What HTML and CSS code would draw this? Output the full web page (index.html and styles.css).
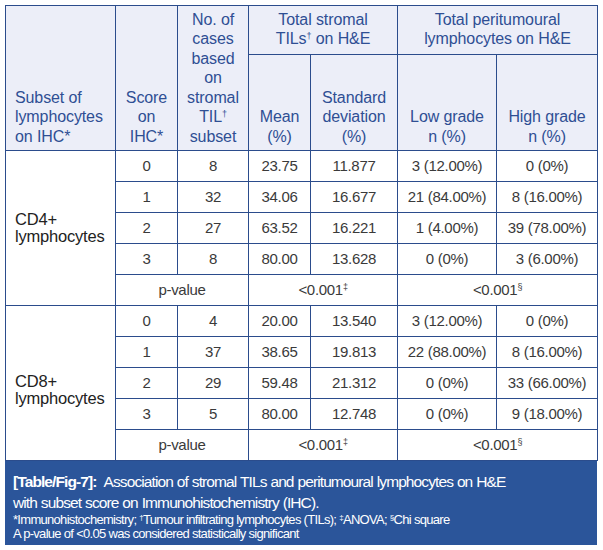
FILE: index.html
```html
<!DOCTYPE html>
<html>
<head>
<meta charset="utf-8">
<link rel="stylesheet" href="styles.css">
</head>
<body>
<div class="figure">
  <table class="data">
    <colgroup>
      <col class="c1"><col class="c2"><col class="c3"><col class="c4"><col class="c5"><col class="c6"><col class="c7">
    </colgroup>
    <thead>
      <tr class="h1">
        <th rowspan="2" class="left">Subset of<br>lymphocytes<br>on IHC*</th>
        <th rowspan="2">Score<br>on<br>IHC*</th>
        <th rowspan="2">No. of<br>cases<br>based<br>on<br>stromal<br>TIL<sup>†</sup><br>subset</th>
        <th colspan="2" class="mid">Total stromal<br>TILs<sup>†</sup> on H&amp;E</th>
        <th colspan="2" class="mid">Total peritumoural<br>lymphocytes on H&amp;E</th>
      </tr>
      <tr class="h2">
        <th>Mean<br>(%)</th>
        <th>Standard<br>deviation<br>(%)</th>
        <th>Low grade<br>n (%)</th>
        <th>High grade<br>n (%)</th>
      </tr>
    </thead>
    <tbody>
      <tr><td rowspan="5" class="label">CD4+<br>lymphocytes</td><td>0</td><td>8</td><td>23.75</td><td>11.877</td><td>3 (12.00%)</td><td>0 (0%)</td></tr>
      <tr><td>1</td><td>32</td><td>34.06</td><td>16.677</td><td>21 (84.00%)</td><td>8 (16.00%)</td></tr>
      <tr><td>2</td><td>27</td><td>63.52</td><td>16.221</td><td>1 (4.00%)</td><td>39 (78.00%)</td></tr>
      <tr><td>3</td><td>8</td><td>80.00</td><td>13.628</td><td>0 (0%)</td><td>3 (6.00%)</td></tr>
      <tr><td colspan="2">p-value</td><td colspan="2">&lt;0.001<sup>‡</sup></td><td colspan="2">&lt;0.001<sup>§</sup></td></tr>
      <tr><td rowspan="5" class="label lower">CD8+<br>lymphocytes</td><td>0</td><td>4</td><td>20.00</td><td>13.540</td><td>3 (12.00%)</td><td>0 (0%)</td></tr>
      <tr><td>1</td><td>37</td><td>38.65</td><td>19.813</td><td>22 (88.00%)</td><td>8 (16.00%)</td></tr>
      <tr><td>2</td><td>29</td><td>59.48</td><td>21.312</td><td>0 (0%)</td><td>33 (66.00%)</td></tr>
      <tr><td>3</td><td>5</td><td>80.00</td><td>12.748</td><td>0 (0%)</td><td>9 (18.00%)</td></tr>
      <tr><td colspan="2">p-value</td><td colspan="2">&lt;0.001<sup>‡</sup></td><td colspan="2">&lt;0.001<sup>§</sup></td></tr>
    </tbody>
  </table>
  <div class="caption">
    <p class="title"><b>[Table/Fig-7]:</b>&nbsp; Association of stromal TILs and peritumoural lymphocytes on H&amp;E<br>with subset score on Immunohistochemistry (IHC).</p>
    <p class="note">*Immunohistochemistry; <sup>†</sup>Tumour infiltrating lymphocytes (TILs); <sup>‡</sup>ANOVA; <sup>§</sup>Chi square</p>
    <p class="note">A p-value of &lt;0.05 was considered statistically significant</p>
  </div>
</div>
</body>
</html>
```
FILE: styles.css
```css
html, body {
  margin: 0;
  padding: 0;
  background: #ffffff;
}
body {
  font-family: "Liberation Sans", Arial, sans-serif;
}
.figure {
  width: 592px;
  margin: 5px 0 0 5px;
}
.data {
  width: 592px;
  border-collapse: collapse;
  table-layout: fixed;
  border: 1px solid #2b4c8c;
}
.c1 { width: 110px; }
.c2 { width: 62px; }
.c3 { width: 71px; }
.c4 { width: 62px; }
.c5 { width: 87px; }
.c6 { width: 99px; }
.c7 { width: 101px; }
.data th, .data td {
  border: 1px solid #2b4c8c;
  padding: 0 1px;
  text-align: center;
  white-space: nowrap;
}
.data th {
  background: #eceef8;
  color: #2f4f94;
  font-weight: normal;
  font-size: 16px;
  line-height: 19.5px;
  vertical-align: bottom;
  padding-bottom: 4px;
  letter-spacing: -0.1px;
}
.data th.left {
  text-align: left;
  padding-left: 9px;
}
.data th.mid {
  vertical-align: middle;
  padding-bottom: 2px;
}
.h1 { height: 49px; }
.h2 { height: 96px; }
.data td {
  height: 30px;
  color: #3a3a3a;
  font-size: 15px;
  line-height: 18px;
  vertical-align: middle;
  letter-spacing: -0.3px;
}
.data td.label {
  text-align: left;
  padding-left: 9px;
  padding-top: 0;
  font-size: 16.5px;
  line-height: 17px;
  letter-spacing: -0.2px;
  color: #222;
}
.data td.label.lower {
  padding-top: 13px;
}
.data sup {
  font-size: 9px;
  line-height: 0;
  vertical-align: 5px;
}
.caption {
  background: #2b559a;
  color: #ffffff;
  padding: 10px 8px 4px 8px;
}
.caption p {
  margin: 0;
  white-space: nowrap;
}
.title {
  font-size: 15.5px;
  line-height: 21px;
  letter-spacing: -0.9px;
  word-spacing: 0.5px;
}
.title b {
  font-weight: bold;
}
.note {
  font-size: 13px;
  line-height: 14px;
  letter-spacing: -0.7px;
}
.note sup {
  font-size: 8px;
  line-height: 0;
  vertical-align: 4px;
}
```
